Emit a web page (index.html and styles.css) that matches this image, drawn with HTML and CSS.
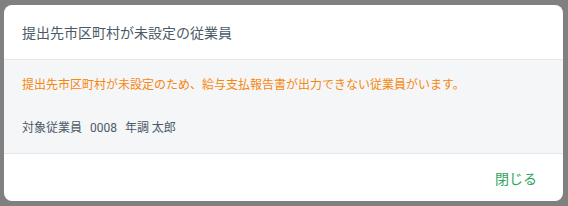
FILE: index.html
```html
<!DOCTYPE html>
<html lang="ja">
<head>
<meta charset="utf-8">
<link rel="stylesheet" href="styles.css">
</head>
<body>
<div class="overlay">
  <div class="dialog">
    <div class="dialog-header">
      <h1 class="dialog-title">提出先市区町村が未設定の従業員</h1>
    </div>
    <div class="dialog-body">
      <p class="warning">提出先市区町村が未設定のため、給与支払報告書が出力できない従業員がいます。</p>
      <p class="employee"><span class="label">対象従業員</span><span class="code">0008</span><span class="name">年調 太郎</span></p>
    </div>
    <div class="dialog-footer">
      <button class="close-btn" type="button">閉じる</button>
    </div>
  </div>
</div>
</body>
</html>
```
FILE: styles.css
```css
html, body {
  margin: 0;
  padding: 0;
  background: #808080;
  font-family: "Noto Sans CJK JP", "Noto Sans", sans-serif;
}
.overlay {
  padding: 5px 5px 5px 4px;
}
.dialog {
  width: 559px;
  height: 196px;
  background: #ffffff;
  border-radius: 8px;
  overflow: hidden;
  display: flex;
  flex-direction: column;
}
.dialog-header {
  height: 54px;
  display: flex;
  align-items: center;
  padding-left: 18px;
  border-bottom: 1px solid #e4e8eb;
}
.dialog-title {
  margin: 0;
  font-size: 14px;
  font-weight: 400;
  color: #4b5a67;
}
.dialog-body {
  background: #f5f6f8;
  padding: 15px 18px 16px;
  border-bottom: 1px solid #e4e8eb;
}
.dialog-body p {
  margin: 0;
  font-size: 12px;
  line-height: 18px;
}
.warning {
  color: #f5870f;
}
.employee {
  margin-top: 25px !important;
  color: #4b5a67;
}
.code {
  margin-left: 8px;
  font-family: "Roboto", "Noto Sans", sans-serif;
}
.name {
  margin-left: 8px;
}
.dialog-footer {
  flex: 1;
  display: flex;
  align-items: center;
  justify-content: flex-end;
  padding-right: 26px;
}
.close-btn {
  border: none;
  background: none;
  padding: 0;
  font-family: inherit;
  font-size: 14px;
  color: #2ea55a;
  cursor: pointer;
}
```
